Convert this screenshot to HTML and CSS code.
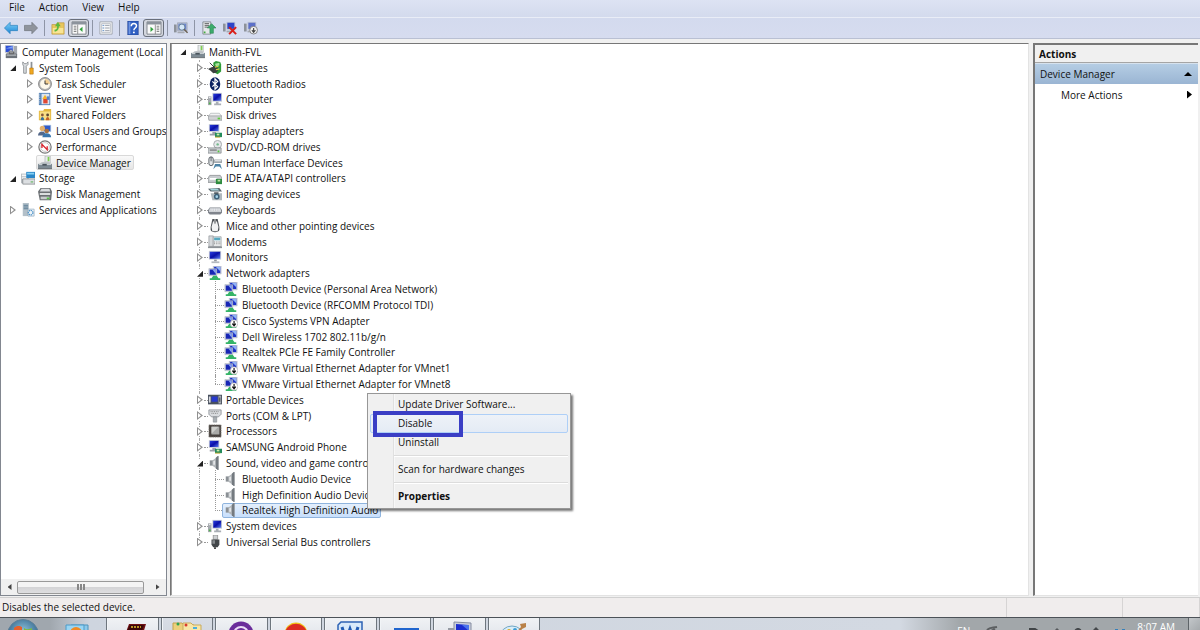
FILE: index.html
```
<!DOCTYPE html>
<html lang="en">
<head>
<meta charset="utf-8">
<title>Computer Management</title>
<link rel="stylesheet" href="styles.css">
</head>
<body>
<svg class="defs" aria-hidden="true">
  <defs>
    <linearGradient id="gScreen" x1="0" y1="0" x2="1" y2="1"><stop offset="0" stop-color="#2a3fe0"/><stop offset=".5" stop-color="#0a0fa8"/><stop offset="1" stop-color="#5b7cf0"/></linearGradient>
    <linearGradient id="gArrow" x1="0" y1="0" x2="0" y2="1"><stop offset="0" stop-color="#7fd0f7"/><stop offset="1" stop-color="#1b86d6"/></linearGradient>
    <radialGradient id="gOrb" cx=".5" cy=".4" r=".6"><stop offset="0" stop-color="#8fc4dd"/><stop offset="1" stop-color="#2d5f86"/></radialGradient>
  </defs>
  <symbol id="mon" viewBox="0 0 16 16"><path d="M1 1h14v10H1z" fill="#c9ced6"/><path d="M2 2h12v8H2z" fill="url(#gScreen)"/><path d="M7 11h3v2H7z" fill="#8f959c"/><path d="M4 13h9v2H4z" fill="#b4b9bf"/></symbol>
  <symbol id="pc" viewBox="0 0 16 16"><path d="M5 1h11v10H5z" fill="#c3c8d2"/><path d="M6 2h9v8H6z" fill="url(#gScreen)"/><path d="M9 11h3v2H9zM7 13h8v2H7z" fill="#a9aeb5"/><path d="M0 5h4v10H0z" fill="#a5a9ae"/><path d="M1 6h2v1H1z" fill="#fff"/><path d="M1 12h2v2H1z" fill="#4fb34b"/></symbol>
  <symbol id="cm" viewBox="0 0 16 16"><path d="M1 0h10v9H1z" fill="#c3c8d2"/><path d="M2 1h8v7H2z" fill="#2c50d8"/><path d="M2 4l8-3v3z" fill="#7fa1f5"/><path d="M11 1h4v10h-4z" fill="#a4a9b0"/><path d="M3 10l5-5 5 5z" fill="#c3c7ce" stroke="#777" stroke-width=".6"/><path d="M2 10h13v5H2z" fill="#6c7279"/><path d="M3 11h11v1H3z" fill="#d9dcdf"/><path d="M6 8h5v2H6z" fill="none" stroke="#555"/></symbol>
  <symbol id="tools" viewBox="0 0 16 16"><path d="M2 1v3l1 2v8h3V6l2-2V1L6 3H4z" fill="#d9dcdf" stroke="#73787d" stroke-width=".8"/><path d="M11 1h2v8h-2z" fill="#8d9297"/><path d="M10 8h4v7h-4z" fill="#f0a820" stroke="#a86c10" stroke-width=".6"/></symbol>
  <symbol id="clock" viewBox="0 0 16 16"><circle cx="8" cy="8" r="7.4" fill="#b9b9b9" stroke="#6f6f6f" stroke-width=".8"/><circle cx="8" cy="8" r="5.6" fill="#fdf8ea"/><path d="M8 8V2.4A5.6 5.6 0 0 1 13.6 8z" fill="#f3cf91"/><path d="M8 4v4h3.5" fill="none" stroke="#333" stroke-width="1.1"/></symbol>
  <symbol id="event" viewBox="0 0 16 16"><path d="M1 1h13v14H1z" fill="#4e7fb7"/><path d="M4 2h9v12H4z" fill="#dce6f0"/><path d="M2 2v12" stroke="#e8e8e8" stroke-dasharray="1 1"/><path d="M5 8l3-5 3 5z" fill="#f5b324"/><path d="M6 8h5v5H6z" fill="#e04733"/><path d="M10 5h3v4h-3z" fill="#5a80c7"/></symbol>
  <symbol id="share" viewBox="0 0 16 16"><path d="M1 3h5l1-2h8v13H1z" fill="#e4b73d"/><path d="M2 4h12v9H2z" fill="#f9df85"/><circle cx="5" cy="8" r="1.6" fill="#8a5a3a"/><circle cx="11" cy="8" r="1.6" fill="#5b4632"/><path d="M3 14c0-5 4-5 4 0z" fill="#3b6f9a"/><path d="M9 14c0-5 4-5 4 0z" fill="#c2622b"/></symbol>
  <symbol id="users" viewBox="0 0 16 16"><path d="M6 1h9v8H6z" fill="#9eb9df"/><path d="M7 2h7v6H7z" fill="#315bc8"/><circle cx="5" cy="5" r="3" fill="#e2b06d"/><path d="M0 13c0-6 9-6 9 0z" fill="#54688a"/><circle cx="10" cy="8" r="2.6" fill="#a86f3c"/><path d="M5 15c0-6 10-6 10 0z" fill="#3976ad"/></symbol>
  <symbol id="perf" viewBox="0 0 16 16"><circle cx="8" cy="8" r="7" fill="#fff" stroke="#777" stroke-width="1.4"/><circle cx="8" cy="8" r="5" fill="none" stroke="#c6c6c6"/><path d="M4.500 9V5l6 6V7" fill="none" stroke="#d9202a" stroke-width="1.5"/></symbol>
  <symbol id="dev" viewBox="0 0 16 16"><path d="M8 0h6v8H8z" fill="#e8ebec" stroke="#a3a7aa" stroke-width=".7"/><path d="M11 1h2v5h-2z" fill="#80ce52"/><path d="M4 7l8-1 3 4H1z" fill="#c0c4c8"/><path d="M0 9h16v5H0z" fill="#7d8a93"/><path d="M1 9h14v1H1z" fill="#dfe3e6"/><path d="M5 9h5v2H5z" fill="#4a545c"/><path d="M0 14h16v1H0z" fill="#51595f"/></symbol>
  <symbol id="storage" viewBox="0 0 16 16"><path d="M0 3h9v11H0z" fill="#b7bcc1"/><path d="M1 4h6v2H1zM1 7h6v2H1z" fill="#f5f6f7"/><path d="M6 1h10v7H6z" fill="#2b87c8"/><path d="M7 2h8v2H7z" fill="#86d0f3"/><path d="M2 9h14v6H2z" fill="#dcdfe2" stroke="#777c81" stroke-width=".8"/><path d="M11 12h3v1h-3z" fill="#42aa3c"/></symbol>
  <symbol id="diskm" viewBox="0 0 16 16"><path d="M3 1h11l2 4-1 10H2L0 5z" fill="#6b6f73"/><path d="M4 2h9l1 3H2z" fill="#d9dcdf"/><path d="M2 7h12v2H2z" fill="#eceeef"/><path d="M3 11h10v3H3z" fill="#c9ccce"/><path d="M10 12h3v2h-3z" fill="#54c247"/></symbol>
  <symbol id="svc" viewBox="0 0 16 16"><path d="M2 0h7v15H2z" fill="#b3c0c9"/><path d="M3 2h5v1H3zM3 4h5v1H3zM3 6h5v1H3z" fill="#5c7e97"/><path d="M8 7h7v8H8z" fill="#eef4f8" stroke="#87a2b6" stroke-width=".7"/><circle cx="11" cy="11" r="2.600" fill="none" stroke="#4d93c9" stroke-width="1.500" stroke-dasharray="1.500 .7"/></symbol>
  <symbol id="bat" viewBox="0 0 16 16"><path d="M6 2l3-2 5 1 1 3v8l-4 3-4-2z" fill="#2f9c38"/><path d="M8 3l5-1v3L9 6z" fill="#a6e39d"/><path d="M0 9l4-2 5-1 3 3-2 4-4 1-3-3z" fill="#3b4140"/><path d="M8 7l4-1M9 10l4-1" stroke="#d8d04a" stroke-width="1.2"/><path d="M2 2l5 5" stroke="#222" stroke-width="1"/></symbol>
  <symbol id="bt" viewBox="0 0 16 16"><ellipse cx="8" cy="8" rx="6" ry="7.700" fill="#0b2161"/><path d="M5 5l6 6-3 3V2l3 3-6 6" fill="none" stroke="#fff" stroke-width="1.400"/></symbol>
  <symbol id="disk" viewBox="0 0 16 16"><path d="M3 6h10l3 4H0z" fill="#f2f3f4" stroke="#a2a6a9" stroke-width=".7"/><path d="M0 9h16v5H1z" fill="#cfd2d4" stroke="#85898c" stroke-width=".7"/><path d="M11 11h3v2h-3z" fill="#5bca3c"/></symbol>
  <symbol id="disp" viewBox="0 0 16 16"><path d="M1 0h12v9H1z" fill="#c7ccd6"/><path d="M2 1h10v7H2z" fill="url(#gScreen)"/><path d="M5 9h4v2H5zM2 11h9v2H2z" fill="#9ba0a8"/><path d="M8 10h8v5H8z" fill="#238b5c"/><path d="M10 11h3v2h-3z" fill="#cfe9a8"/><path d="M8 15h6" stroke="#d2a92d"/></symbol>
  <symbol id="dvd" viewBox="0 0 16 16"><circle cx="11" cy="5" r="4.500" fill="#e5e8ea" stroke="#9da2a6"/><circle cx="11" cy="5" r="1.400" fill="#73b98a"/><path d="M0 9h15v6H0z" fill="#cdd1d4" stroke="#7d8185" stroke-width=".8"/><path d="M2 11h8v1H2z" fill="#555"/><path d="M11 12h2v2h-2z" fill="#53c53b"/></symbol>
  <symbol id="hid" viewBox="0 0 16 16"><rect x="1" y="1" width="5" height="10" rx="2.500" fill="#e1e4e6" stroke="#4c5359"/><path d="M3.500 1v5" stroke="#4c5359"/><path d="M7 4h9v4H7z" fill="#a2a8ad"/><path d="M8 5h7v1H8z" fill="#fff"/><path d="M6 15l2-6h6l2 6-3-3H9z" fill="#4c83a5"/></symbol>
  <symbol id="ide" viewBox="0 0 16 16"><path d="M2 5h12l2 3v5H0V8z" fill="#c8cccf" stroke="#7e8285" stroke-width=".8"/><path d="M2 8h8v2H2z" fill="#fff"/><path d="M9 9h7v6H9z" fill="#2e8b40"/><path d="M11 10h3v2h-3z" fill="#bde2a1"/></symbol>
  <symbol id="img" viewBox="0 0 16 16"><path d="M0 2l13-1 3 4H3z" fill="#5b666e"/><path d="M2 2h9l2 2H4z" fill="#a4d4dc"/><path d="M3 7h13v8H5z" fill="#b0b8bd"/><path d="M7 6h5v2H7z" fill="#555e64"/><circle cx="10" cy="11" r="3.200" fill="#3b5f78"/><circle cx="10" cy="11" r="1.500" fill="#a6d4ea"/></symbol>
  <symbol id="kbd" viewBox="0 0 16 16"><path d="M2 5h12l2 3v3l-2 2H2l-2-2V8z" fill="#7f848c"/><path d="M2 6h12l1 4H1z" fill="#e9ebee"/><path d="M2 7h12M2 8.500h12" stroke="#9b9fa7" stroke-width=".6" stroke-dasharray="1 1"/></symbol>
  <symbol id="mouse" viewBox="0 0 16 16"><path d="M5 0h6l2 9v3c0 4-10 4-10 0V9z" fill="#4d5257"/><path d="M6 2l2 4 2-4 2 7-1 5H5L4 9z" fill="#f1f2f3"/><path d="M8 0v5" stroke="#e7e7e7"/></symbol>
  <symbol id="modem" viewBox="0 0 16 16"><path d="M1 1h5v12H1z" fill="#d6d9dc" stroke="#858a8f" stroke-width=".7"/><path d="M6 2h9v11H6z" fill="#eceeef" stroke="#858a8f" stroke-width=".7"/><path d="M7 3h7v3H7z" fill="#56a9c0"/><path d="M7 8h7M7 10h7" stroke="#777" stroke-dasharray="1 1"/><path d="M0 13h16v2H0z" fill="#8c9196"/></symbol>
  <symbol id="net" viewBox="0 0 16 16"><path d="M6 0h9v9H6z" fill="#c5cbdc" stroke="#9aa2ba" stroke-width=".5"/><path d="M7 1h7v7H7z" fill="#1c31c8"/><path d="M9 1h5v5z" fill="#8fb2f6"/><path d="M1 3h9v8H1z" fill="#d4d8e2" stroke="#8d94a6" stroke-width=".5"/><path d="M2 4h7v6H2z" fill="#1726b4"/><path d="M5 4h4v5z" fill="#8aa6f2"/><path d="M6 11h4l2 3h2v2H2v-2h2z" fill="#35b467"/></symbol>
  <symbol id="netd" viewBox="0 0 16 16"><use href="#net"/><circle cx="11.500" cy="11" r="4.300" fill="#fff" stroke="#999" stroke-width=".6"/><path d="M11.500 8v5M9.500 11l2 2.500 2-2.500" fill="none" stroke="#111" stroke-width="1.300"/></symbol>
  <symbol id="port" viewBox="0 0 16 16"><path d="M0 2h16v11H0z" fill="#48505e"/><path d="M4 4h7v6H4z" fill="#2739cf"/><path d="M1 4h2v7H1z" fill="#d8dbe0"/><path d="M12 3h3v9h-3z" fill="#a8adb5"/><path d="M13 5h1v5h-1z" fill="#333"/></symbol>
  <symbol id="com" viewBox="0 0 16 16"><path d="M1 1h14v5l-3 3H4L1 6z" fill="#d9dcdf" stroke="#7b8085" stroke-width=".8"/><path d="M3 3h10M4 5h8" stroke="#777" stroke-dasharray="1 1"/><path d="M6 9h4v6H6z" fill="#aab0b5" stroke="#7b8085" stroke-width=".6"/></symbol>
  <symbol id="cpu" viewBox="0 0 16 16"><path d="M1 1h14v14H1z" fill="#47423f"/><path d="M1 1h14v14H1z" fill="none" stroke="#96918c" stroke-dasharray="1 1"/><path d="M4 3h9v9H4z" fill="#a9aaa8"/><path d="M4 3h8L4 11z" fill="#cdcecb"/></symbol>
  <symbol id="spk" viewBox="0 0 16 16"><path d="M2 5h4v6H2z" fill="#8b9095"/><path d="M5 5l7-5v16l-7-5z" fill="#b4b8bc"/><path d="M9 2l2-2h1v16h-1l-2-2z" fill="#747a80"/><path d="M6 6l2-1v5H6z" fill="#e4e6e8"/></symbol>
  <symbol id="usb" viewBox="0 0 16 16"><path d="M6 0h5v5H6z" fill="#cdd0d3" stroke="#777" stroke-width=".7"/><path d="M4 5h9v6l-2 3H6l-2-3z" fill="#43474a"/><path d="M5 6h3v4H5z" fill="#85898c"/><path d="M8 14v2" stroke="#333" stroke-width="2"/></symbol>
  <symbol id="tback" viewBox="0 0 16 16"><path d="M0.500 8L7 1.500V5h8.500v6H7v3.500z" fill="url(#gArrow)" stroke="#2880bd" stroke-width=".8"/></symbol>
  <symbol id="tfwd" viewBox="0 0 16 16"><path d="M15.500 8L9 1.500V5H.5v6H9v3.500z" fill="#8f949c" stroke="#70757d" stroke-width=".8"/></symbol>
  <symbol id="tup" viewBox="0 0 16 16"><path d="M1 4h5l1-2h8v13H1z" fill="#e7c65c" stroke="#b8923a" stroke-width=".7"/><path d="M2 8h12v6H2z" fill="#f8e494"/><path d="M4 12c4 0 5-3 5-6h2L8 1 4.500 6H7c0 3-1 4-3 4z" fill="#5cb93f"/></symbol>
  <symbol id="tpane" viewBox="0 0 18 16"><path d="M1 1h16v14H1z" fill="#fafafa" stroke="#777d85"/><path d="M1 1h16v3H1z" fill="#8c939c"/><path d="M3 6h3M3 8h3M3 10h3M3 12h3" stroke="#777"/><path d="M7.500 4v11" stroke="#888"/><path d="M13 6.500v6L9.500 9.500z" fill="#2fa03b"/></symbol>
  <symbol id="tpane2" viewBox="0 0 18 16"><path d="M1 1h16v14H1z" fill="#fafafa" stroke="#777d85"/><path d="M1 1h16v3H1z" fill="#8c939c"/><path d="M12 6h3M12 8h3M12 10h3M12 12h3" stroke="#777"/><path d="M10.500 4v11" stroke="#888"/><path d="M5 6.500v6l3.500-3z" fill="#2fa03b"/></symbol>
  <symbol id="tprop" viewBox="0 0 16 16"><path d="M1 1h14v14H1z" fill="#f8f9fa" stroke="#9ba1a9"/><path d="M3 3h10v10H3z" fill="none" stroke="#b7bcc4"/><path d="M4 5h2M4 8h2M4 11h2" stroke="#5484c0"/><path d="M7 5h5M7 8h5M7 11h5" stroke="#9096a0"/></symbol>
  <symbol id="thelp" viewBox="0 0 16 16"><path d="M2 0h12v16H2z" fill="#2f5fc3" stroke="#1f3f8c" stroke-width=".7"/><path d="M3 1h2v14H3z" fill="#6f95e0"/><path d="M6 6c0-4 6-4 6-.5C12 8 9 8 9 10.500" fill="none" stroke="#fff" stroke-width="1.700"/><circle cx="9" cy="13" r="1.100" fill="#fff"/></symbol>
  <symbol id="tscan" viewBox="0 0 16 16"><path d="M4 2h11v9H4z" fill="#c2c8d4" stroke="#8a90a0" stroke-width=".6"/><path d="M5 3h9v7H5z" fill="#6c86cf"/><path d="M0 4h3v9H0z" fill="#8d929a"/><path d="M4 12h8v2H4z" fill="#a5a9b1"/><circle cx="9" cy="7" r="3.500" fill="#d5e8f8" stroke="#5f7892"/><path d="M11.500 9.500l4 4" stroke="#6b6154" stroke-width="1.800"/></symbol>
  <symbol id="tupd" viewBox="0 0 16 16"><path d="M1 1h9v14H1z" fill="#e4e7ea" stroke="#6c7278" stroke-width=".8"/><path d="M3 3h5M3 5h5M3 7h5" stroke="#555"/><path d="M2 12h2v2H2z" fill="#42ad3e"/><path d="M11 3l5 5h-3v6H9V8H6z" fill="#3cab6d" stroke="#1f7e45" stroke-width=".6"/></symbol>
  <symbol id="tunin" viewBox="0 0 16 16"><path d="M4 1h10v9H4z" fill="#bcc3d2"/><path d="M5 2h8v7H5z" fill="#2d44c8"/><path d="M0 3h3v9H0z" fill="#8d929a"/><path d="M4 11h6v2H4z" fill="#a5a9b1"/><path d="M7 7l8 8M15 7l-8 8" stroke="#d91e18" stroke-width="2.300"/></symbol>
  <symbol id="tdis" viewBox="0 0 16 16"><path d="M4 1h10v9H4z" fill="#bcc3d2"/><path d="M5 2h8v7H5z" fill="#5d70c9"/><path d="M0 3h3v9H0z" fill="#8d929a"/><path d="M4 11h6v2H4z" fill="#a5a9b1"/><circle cx="11" cy="10.500" r="4.400" fill="#f3f3f3" stroke="#777"/><path d="M11 8v5M9 10.500l2 2.500 2-2.500" fill="none" stroke="#444" stroke-width="1.300"/></symbol>
</svg>

<nav class="menubar"><button>File</button><button>Action</button><button>View</button><button>Help</button></nav>

<div class="toolbar" role="toolbar" aria-label="Tools">
  <button aria-label="Back"><svg><use href="#tback"/></svg></button>
  <button aria-label="Forward"><svg><use href="#tfwd"/></svg></button>
  <span class="sep"></span>
  <button aria-label="Up one level"><svg><use href="#tup"/></svg></button>
  <button class="on" aria-label="Show console tree"><svg><use href="#tpane"/></svg></button>
  <span class="sep"></span>
  <button aria-label="Properties"><svg><use href="#tprop"/></svg></button>
  <span class="sep"></span>
  <button aria-label="Help"><svg><use href="#thelp"/></svg></button>
  <button class="on" aria-label="Show action pane"><svg><use href="#tpane2"/></svg></button>
  <span class="sep"></span>
  <button aria-label="Scan for hardware changes"><svg><use href="#tscan"/></svg></button>
  <span class="sep"></span>
  <button aria-label="Update driver"><svg><use href="#tupd"/></svg></button>
  <button aria-label="Uninstall"><svg><use href="#tunin"/></svg></button>
  <button aria-label="Disable"><svg><use href="#tdis"/></svg></button>
</div>

<main class="panes">
  <section class="pane console">
    <ul class="tree nav">
      <li class="row top"><svg><use href="#cm"/></svg><span>Computer Management (Local</span></li>
      <li class="row l1"><i class="tw open"></i><svg><use href="#tools"/></svg><span>System Tools</span></li>
      <li class="row l2"><i class="tw"></i><svg><use href="#clock"/></svg><span>Task Scheduler</span></li>
      <li class="row l2"><i class="tw"></i><svg><use href="#event"/></svg><span>Event Viewer</span></li>
      <li class="row l2"><i class="tw"></i><svg><use href="#share"/></svg><span>Shared Folders</span></li>
      <li class="row l2"><i class="tw"></i><svg><use href="#users"/></svg><span>Local Users and Groups</span></li>
      <li class="row l2"><i class="tw"></i><svg><use href="#perf"/></svg><span>Performance</span></li>
      <li class="row l2"><i class="tw none"></i><div class="pick grey"><svg><use href="#dev"/></svg><span>Device Manager</span></div></li>
      <li class="row l1"><i class="tw open"></i><svg><use href="#storage"/></svg><span>Storage</span></li>
      <li class="row l2"><i class="tw none"></i><svg><use href="#diskm"/></svg><span>Disk Management</span></li>
      <li class="row l1"><i class="tw"></i><svg><use href="#svc"/></svg><span>Services and Applications</span></li>
    </ul>
    <div class="scroll"><button class="arrow left" aria-label="Scroll left"></button><div class="thumb"><i></i><i></i><i></i></div><button class="arrow right" aria-label="Scroll right"></button></div>
  </section>

  <section class="pane devices">
    <ul class="tree hw">
      <li class="row l0"><i class="tw open"></i><svg><use href="#dev"/></svg><span>Manith-FVL</span></li>
      <li class="row l1"><i class="tw"></i><svg><use href="#bat"/></svg><span>Batteries</span></li>
      <li class="row l1"><i class="tw"></i><svg><use href="#bt"/></svg><span>Bluetooth Radios</span></li>
      <li class="row l1"><i class="tw"></i><svg><use href="#pc"/></svg><span>Computer</span></li>
      <li class="row l1"><i class="tw"></i><svg><use href="#disk"/></svg><span>Disk drives</span></li>
      <li class="row l1"><i class="tw"></i><svg><use href="#disp"/></svg><span>Display adapters</span></li>
      <li class="row l1"><i class="tw"></i><svg><use href="#dvd"/></svg><span>DVD/CD-ROM drives</span></li>
      <li class="row l1"><i class="tw"></i><svg><use href="#hid"/></svg><span>Human Interface Devices</span></li>
      <li class="row l1"><i class="tw"></i><svg><use href="#ide"/></svg><span>IDE ATA/ATAPI controllers</span></li>
      <li class="row l1"><i class="tw"></i><svg><use href="#img"/></svg><span>Imaging devices</span></li>
      <li class="row l1"><i class="tw"></i><svg><use href="#kbd"/></svg><span>Keyboards</span></li>
      <li class="row l1"><i class="tw"></i><svg><use href="#mouse"/></svg><span>Mice and other pointing devices</span></li>
      <li class="row l1"><i class="tw"></i><svg><use href="#modem"/></svg><span>Modems</span></li>
      <li class="row l1"><i class="tw"></i><svg><use href="#mon"/></svg><span>Monitors</span></li>
      <li class="row l1"><i class="tw open"></i><svg><use href="#net"/></svg><span>Network adapters</span></li>
      <li class="row l2"><i class="tw none"></i><svg><use href="#net"/></svg><span>Bluetooth Device (Personal Area Network)</span></li>
      <li class="row l2"><i class="tw none"></i><svg><use href="#net"/></svg><span>Bluetooth Device (RFCOMM Protocol TDI)</span></li>
      <li class="row l2"><i class="tw none"></i><svg><use href="#netd"/></svg><span>Cisco Systems VPN Adapter</span></li>
      <li class="row l2"><i class="tw none"></i><svg><use href="#net"/></svg><span>Dell Wireless 1702 802.11b/g/n</span></li>
      <li class="row l2"><i class="tw none"></i><svg><use href="#net"/></svg><span>Realtek PCIe FE Family Controller</span></li>
      <li class="row l2"><i class="tw none"></i><svg><use href="#netd"/></svg><span>VMware Virtual Ethernet Adapter for VMnet1</span></li>
      <li class="row l2 last"><i class="tw none"></i><svg><use href="#netd"/></svg><span>VMware Virtual Ethernet Adapter for VMnet8</span></li>
      <li class="row l1"><i class="tw"></i><svg><use href="#port"/></svg><span>Portable Devices</span></li>
      <li class="row l1"><i class="tw"></i><svg><use href="#com"/></svg><span>Ports (COM &amp; LPT)</span></li>
      <li class="row l1"><i class="tw"></i><svg><use href="#cpu"/></svg><span>Processors</span></li>
      <li class="row l1"><i class="tw"></i><svg><use href="#disp"/></svg><span>SAMSUNG Android Phone</span></li>
      <li class="row l1"><i class="tw open"></i><svg><use href="#spk"/></svg><span>Sound, video and game controllers</span></li>
      <li class="row l2"><i class="tw none"></i><svg><use href="#spk"/></svg><span>Bluetooth Audio Device</span></li>
      <li class="row l2"><i class="tw none"></i><svg><use href="#spk"/></svg><span>High Definition Audio Device</span></li>
      <li class="row l2 last"><i class="tw none"></i><div class="pick blue"><svg><use href="#spk"/></svg><span>Realtek High Definition Audio</span></div></li>
      <li class="row l1"><i class="tw"></i><svg><use href="#pc"/></svg><span>System devices</span></li>
      <li class="row l1 last"><i class="tw"></i><svg><use href="#usb"/></svg><span>Universal Serial Bus controllers</span></li>
    </ul>
    <div class="menu" role="menu">
      <button role="menuitem">Update Driver Software...</button>
      <button role="menuitem" class="hover">Disable</button>
      <button role="menuitem">Uninstall</button>
      <hr>
      <button role="menuitem">Scan for hardware changes</button>
      <hr>
      <button role="menuitem" class="bold">Properties</button>
      <div class="marker"></div>
    </div>
  </section>

  <aside class="pane actions">
    <h2>Actions</h2>
    <button class="group">Device Manager<i class="up"></i></button>
    <button class="more">More Actions<i class="side"></i></button>
  </aside>
</main>

<footer class="status"><span>Disables the selected device.</span><span></span><span></span></footer>

<div class="taskbar">
  <div class="start">
    <svg class="orb" viewBox="0 0 32 32"><circle cx="16" cy="16" r="15.500" fill="url(#gOrb)" stroke="#5d7f98"/><path d="M7 9c3-3 6-2 8-1v8H7z" fill="#e5602c"/><path d="M17 9c3 2 6 1 8 0v7h-8z" fill="#7fba42"/></svg>
    <svg class="pin" viewBox="0 0 24 24"><path d="M6 1h17v20H6z" fill="#8cc9ea" stroke="#4f93bb"/><path d="M1 1h18v21H1z" fill="#9ad5f3" stroke="#4a9bc9"/><circle cx="11" cy="9" r="6" fill="#f08a24"/></svg>
  </div>
  <div class="tasks">
    <button class="lit" aria-label="Reader"><svg viewBox="0 0 32 24"><path d="M13 4h17l-6 19H6z" fill="#6f1013"/><path d="M14 5h14l-2 6H11z" fill="#3b0608"/><path d="M15 7h10" stroke="#e5c22d" stroke-width="1.500" stroke-dasharray="2 1"/></svg></button>
    <button aria-label="Explorer"><svg viewBox="0 0 32 24"><path d="M2 3h9l2 2h10v18H2z" fill="#ecd07c" stroke="#c3a14c"/><path d="M12 3h8l2 2h8v18H12z" fill="#f8e6a6" stroke="#c9ab5c"/><circle cx="7" cy="4" r="1.500" fill="#2ca352"/><circle cx="15" cy="5" r="1.500" fill="#da3b2f"/><path d="M22 7h4v2h-4z" fill="#4db0dd"/></svg></button>
    <button class="lit" aria-label="Browser"><svg viewBox="0 0 32 24"><circle cx="16" cy="14" r="12.500" fill="#6a2c9b"/><path d="M9 14a7 7 0 0 1 14 0M12 15a4 4 0 0 1 8 0" fill="none" stroke="#eadcf5" stroke-width="2"/></svg></button>
    <button class="lit" aria-label="Chrome"><svg viewBox="0 0 32 24"><circle cx="16" cy="14" r="11.500" fill="#f2c518"/><path d="M5 12a11.500 11.500 0 0 1 22 0l-9-2-8 5z" fill="#dc2c22"/><path d="M5 11l6 12H7a12 12 0 0 1-2-12z" fill="#3ba64a"/><circle cx="16" cy="15" r="5" fill="#fff"/></svg></button>
    <button class="lit" aria-label="Word"><svg viewBox="0 0 32 24"><path d="M7 2h21v22H4V5z" fill="#d8e9fa" stroke="#2c62b4" stroke-width="1.500"/><path d="M8 7l4 13 4-11 4 11 4-13" fill="none" stroke="#205bb4" stroke-width="3"/></svg></button>
    <button class="lit" aria-label="Window"><svg viewBox="0 0 32 24"><path d="M5 9h25v14H5z" fill="#d7e7f7"/><path d="M5 8h25v4H5z" fill="#1f65ce"/></svg></button>
    <button class="lit" aria-label="Computer Management"><svg viewBox="0 0 32 24"><path d="M11 2l17 1v15l-17-2z" fill="#c9cfdd" stroke="#868da0"/><path d="M13 4l13 1v11l-13-2z" fill="#1b2ed0"/><path d="M19 5h7v6z" fill="#4a73ec"/><path d="M5 8h6v14H5z" fill="#969ca5"/></svg></button>
    <button class="lit" aria-label="Paint"><svg viewBox="0 0 32 24"><ellipse cx="14" cy="17" rx="12" ry="11" fill="#d8edf8" stroke="#70a6c4"/><circle cx="11" cy="11" r="2" fill="#e2b026"/><circle cx="17" cy="10" r="2" fill="#3c9cd7"/><path d="M15 16l8-9-1-3 6-1v4l-4 2-6 9z" fill="#b98249"/></svg></button>
  </div>
  <div class="tray">
    <span class="lang">EN</span>
    <svg class="trayicons" viewBox="0 0 150 14"><path d="M9 12c3-3 5-2 10-3M11 14l6-3" stroke="#5c5f61" fill="none" stroke-width="2"/><path d="M51 11h6l3 2" stroke="#414548" stroke-width="2" fill="none"/><path d="M77 13l2-2 2 2" stroke="#565a5d" fill="none" stroke-width="1.500"/><path d="M96 13c2-4 6-4 8 0zM114 13l4-4 4 4z" fill="#45494c"/><path d="M137 11h3v2h-3zM144 11h3v2h-3z" fill="#3580bb"/></svg>
    <time>8:07 AM</time>
    <button class="peek" aria-label="Show desktop"></button>
  </div>
</div>
</body>
</html>
```
FILE: styles.css
```
* { box-sizing: border-box; }
html, body { height: 100%; }
body {
  margin: 0;
  display: flex;
  flex-direction: column;
  overflow: hidden;
  background: #f0f0f0;
  color: #111;
  font-family: "Open Sans", "Noto Sans", sans-serif;
  font-size: 10px;
  line-height: 16px;
}
button { font: inherit; color: inherit; border: 0; padding: 0; margin: 0; background: none; text-align: left; }
ul { list-style: none; margin: 0; padding: 0; }
svg { display: block; flex: none; }
.defs { position: absolute; width: 0; height: 0; }

.menubar {
  display: flex;
  gap: 14px;
  height: 18px;
  padding: 0 9px;
  align-items: flex-start;
  background: linear-gradient(#dde3f3, #d3daed);
  border-bottom: 1px solid #e9edf7;
}
.menubar button { line-height: 14px; }

.toolbar {
  display: flex;
  align-items: center;
  height: 21px;
  padding: 0 1px;
  background: linear-gradient(#d3daee, #d6dcef);
  border-bottom: 1px solid #b9c0d3;
}
.toolbar button { width: 20px; height: 18px; display: grid; place-items: center; }
.toolbar button:nth-last-child(-n+3) { width: 21px; }
.toolbar svg { width: 14px; height: 14px; }
.toolbar .on { width: 21px; background: #d3d6de; border: 1px solid #686e7a; border-radius: 3px; }
.toolbar .on svg { width: 16px; }
.sep { width: 1px; height: 16px; margin: 0 3px; background: #8e95a6; }

.panes {
  flex: 1;
  min-height: 0;
  display: grid;
  grid-template-columns: 167px 1fr 165px;
  gap: 3px;
  padding: 4px 2px 1px 0;
}
.pane { background: #fff; border: 1px solid #828790; min-width: 0; position: relative; }
.console { display: flex; flex-direction: column; justify-content: space-between; overflow: hidden; }
.devices { margin-right: 1px; border-color: #777 #e3e3e3 #e3e3e3 #777; box-shadow: inset 1px 0 #a0a0a0; }
.actions { border-width: 2px 0 1px 2px; border-color: #777 #e3e3e3 #e3e3e3 #777; }

.tree { display: grid; grid-auto-rows: 1fr; }
.nav { height: 174px; }
.hw { height: 506px; }
.row { display: flex; align-items: center; min-height: 0; position: relative; white-space: nowrap; }
.row svg { width: 14px; height: 14px; margin-right: 4px; }
.nav .top { padding-left: 3px; }
.nav .l1 { padding-left: 7px; }
.nav .l2 { padding-left: 24px; }
.hw .l0 { padding-left: 7px; }
.hw .l1 { padding-left: 24px; }
.hw .l2 { padding-left: 40px; }

.tw { width: 10px; height: 9px; margin-right: 3px; position: relative; background: #fff; }
.tw::before { content: ""; position: absolute; left: 2px; top: 0; width: 6px; height: 9px; background: #909090; clip-path: polygon(0 0, 100% 50%, 0 100%); }
.tw::after { content: ""; position: absolute; left: 3px; top: 2px; width: 3px; height: 5px; background: #fff; clip-path: polygon(0 0, 100% 50%, 0 100%); }
.tw.open::before { top: 2px; height: 6px; background: #222; clip-path: polygon(100% 0, 100% 100%, 0 100%); }
.tw.open::after, .tw.none::before, .tw.none::after { display: none; }
.tw.none { background: none; }

/* dotted connector lines */
.hw .l1::before, .hw .l2::before { content: ""; position: absolute; left: 28px; top: 0; bottom: 0; border-left: 1px dotted #aaa; }
.hw .l1.last::before { bottom: 50%; }
.hw .l1::after { content: ""; position: absolute; left: 33px; width: 4px; top: 50%; border-top: 1px dotted #999; }
.hw .l2::after { content: ""; position: absolute; left: 44px; width: 9px; top: 50%; border-top: 1px dotted #999; }
.hw .l2 .tw::before { display: block; left: 4px; top: -4px; width: 0; height: 17px; background: none; clip-path: none; border-left: 1px dotted #999; }
.hw .l2.last .tw::before { height: 9px; }

.pick { display: flex; align-items: center; height: 15px; margin-left: -2px; padding: 0 2px 0 1px; border: 1px solid; border-radius: 2px; z-index: 1; }
.grey { background: linear-gradient(#f9f9f9, #e6e6e6); border-color: #d9d9d9; }
.blue { background: linear-gradient(#e4effc, #c8dffc); border-color: #8fb4de; }

.scroll { display: flex; align-items: center; height: 16px; background: #f0f0f0; padding: 1px 1px; }
.arrow { width: 15px; height: 14px; display: grid; place-items: center; }
.arrow::before { content: ""; width: 4px; height: 6px; background: #444; clip-path: polygon(0 0, 100% 50%, 0 100%); }
.arrow.left::before { clip-path: polygon(100% 0, 100% 100%, 0 50%); }
.thumb { flex: 1; margin-right: 6px; height: 13px; display: flex; gap: 1px; align-items: center; justify-content: center; background: linear-gradient(#f4f4f4 45%, #d4d4d6 50%, #dedee0); border: 1px solid #999; border-radius: 2px; }
.thumb i { width: 2px; height: 6px; background: #888; }

.menu {
  position: absolute;
  left: 196px;
  top: 349px;
  width: 204px;
  padding: 1px 2px 2px;
  z-index: 2;
  display: flex;
  flex-direction: column;
  border: 1px solid #979797;
  background: linear-gradient(90deg, #f0f0f0 25px, #e0e0e0 25px, #e0e0e0 26px, #fff 26px, #f0f0f0 27px);
  box-shadow: 2px 2px 2px #00000088;
}
.menu button { height: 19px; line-height: 17px; padding-left: 27px; border: 1px solid transparent; border-radius: 2px; }
.menu .hover { background: linear-gradient(#eef2f8, #e4ebf5); border-color: #aecff7; }
.menu .bold { font-weight: 700; }
.menu hr { width: 174px; height: 2px; margin: 3px 0 3px auto; border: 0; border-top: 1px solid #dcdcdc; background: #fff; }
.marker { position: absolute; left: 5px; top: 17px; width: 90px; height: 26px; border: 4px solid #3a3ec5; }

.actions h2 { margin: 0; height: 18px; padding-left: 4px; font-size: 10px; line-height: 18px; background: #f0f0f0; border-bottom: 1px solid #a5a5a5; }
.actions button { width: 100%; height: 21px; display: flex; align-items: center; justify-content: space-between; padding: 0 6px 0 5px; }
.actions .group { background: linear-gradient(#b5cde4, #9ab5d3); border-top: 1px solid #d6e2ee; }
.actions .more { padding-left: 26px; }
.up { width: 8px; height: 4px; background: #000; clip-path: polygon(50% 0, 100% 100%, 0 100%); }
.side { width: 5px; height: 8px; background: #000; clip-path: polygon(0 0, 100% 50%, 0 100%); }

.status { display: grid; grid-template-columns: 1fr 116px 77px; height: 20px; background: #f0eded; border-top: 1px solid #d0d0d0; line-height: 19px; }
.status span { padding-left: 2px; border-right: 1px solid #d6d4d4; }

.taskbar { display: flex; justify-content: space-between; height: 13px; overflow: hidden; border-top: 1px solid #4c5258; background: linear-gradient(90deg, #a0a7ae, #a0a7ae 50px, #ced5df 90px, #d3d9e2 900px, #a2a7aa 960px, #a2a7aa); }
.start { width: 106px; display: flex; gap: 26px; padding: 1px 7px; flex: none; }
.orb { width: 32px; height: 32px; }
.pin { width: 24px; height: 24px; margin-top: 5px; }
.tasks { width: 434px; margin-right: auto; display: flex; gap: 2px; }
.tasks button { flex: 1; height: 32px; display: flex; justify-content: center; padding-top: 2px; border: 1px solid #6e767e; border-top: 0; background: linear-gradient(#d8dde5, #cdd3dc); box-shadow: inset 1px 0 #f1f4f7; }
.tasks .lit { background: linear-gradient(#f0f2f5, #d8dde4); }
.tasks svg { width: 32px; height: 24px; }
.tray { display: flex; color: #fff; flex: none; }
.lang { padding-top: 5px; }
.trayicons { width: 150px; height: 14px; margin: 0 9px 0 8px; }
.tray time { padding: 1px 13px 0 0; }
.peek { width: 12px; height: 32px; border-left: 1px solid #5e6468; background: linear-gradient(135deg, #c3c7ca, #8b9093); }
```
